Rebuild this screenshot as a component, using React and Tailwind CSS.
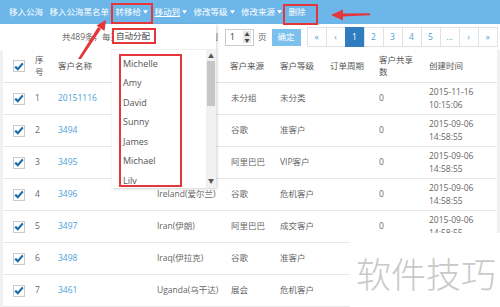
const ROWS = [
  { no: 1, name: '20151116', country: '', source: '未分组', level: '未分类', share: '0', date: '2015-11-16', time: '10:15:06' },
  { no: 2, name: '3494', country: 'Iceland(冰岛)', source: '谷歌', level: '准客户', share: '0', date: '2015-09-06', time: '14:58:55' },
  { no: 3, name: '3495', country: 'India(印度)', source: '阿里巴巴', level: 'VIP客户', share: '0', date: '2015-09-06', time: '14:58:55' },
  { no: 4, name: '3496', country: 'Ireland(爱尔兰)', source: '谷歌', level: '危机客户', share: '0', date: '2015-09-06', time: '14:58:55' },
  { no: 5, name: '3497', country: 'Iran(伊朗)', source: '阿里巴巴', level: '成交客户', share: '0', date: '2015-09-06', time: '14:58:55' },
  { no: 6, name: '3498', country: 'Iraq(伊拉克)', source: '谷歌', level: '准客户', share: '', date: '', time: '' },
  { no: 7, name: '3461', country: 'Uganda(乌干达)', source: '展会', level: '危机客户', share: '', date: '', time: '' },
]

const USERS = ['Michelle', 'Amy', 'David', 'Sunny', 'James', 'Michael', 'Lilv']
const PAGES = ['«', '‹', '1', '2', '3', '4', '5', '...', '›', '»']

const COLS = 'grid grid-cols-[28px_23px_99px_73px_50px_50px_49px_50px_78px]'

function Caret() {
  return (
    <svg width="5" height="4" viewBox="0 0 6 4" className="ml-[2px] inline-block">
      <path d="M0 0h6L3 4z" fill="#fff" />
    </svg>
  )
}

function Check() {
  return (
    <span className="w-[12px] h-[12px] border border-[#c9c9c9] bg-white flex items-center justify-center">
      <svg width="10" height="9" viewBox="0 0 10 9">
        <path d="M1.2 4.6l2.6 2.6L8.8 1.4" fill="none" stroke="#1d6aa8" strokeWidth="2.2" />
      </svg>
    </span>
  )
}

export default function App() {
  return (
    <div className="relative w-[500px] h-[307px] overflow-hidden bg-[#f1f1f1] text-[8.5px] leading-[12.5px] text-[#666] font-['Open_Sans','Noto_Sans_CJK_SC',sans-serif]">
      {/* toolbar */}
      <div className="h-[24px] bg-[#6db6e9] flex items-center pl-[9px] gap-[6.5px] text-white">
        <span>移入公海</span>
        <span>移入公海黑名单</span>
        <span className="flex items-center">转移给<Caret /></span>
        <span className="flex items-center"><span className="underline">移动到</span><Caret /></span>
        <span className="flex items-center">修改等级<Caret /></span>
        <span className="flex items-center">修改来源<Caret /></span>
        <span>删除</span>
      </div>

      {/* pager row */}
      <div className="h-[26px] bg-white flex items-center">
        <div className="ml-[62px] w-[156px] flex items-center">
          <span>共489条，每页</span>
          <span className="ml-auto">跳到</span>
        </div>
        <div className="ml-[7px] w-[29px] h-[17px] border border-[#ccc] flex items-center justify-between pl-[4px] pr-[2px] text-[#333]">
          <span>1</span>
          <span className="w-[8px] h-[12px] bg-[#e6e6e6] text-[5px] leading-[6px] text-center text-[#444]">▲<br />▼</span>
        </div>
        <span className="ml-[4px]">页</span>
        <span className="ml-[5px] w-[29px] h-[17px] bg-[#7cc0ee] text-white flex items-center justify-center">确定</span>
        <div className="ml-[6px] flex">
          {PAGES.map((p, i) => (
            <span
              key={i}
              className={
                p === '1'
                  ? 'w-[20px] h-[20px] -ml-px first:ml-0 flex items-center justify-center border border-[#2f7cbf] bg-[#2f7cbf] text-white'
                  : 'w-[20px] h-[20px] -ml-px first:ml-0 flex items-center justify-center border border-[#e2e2e2] bg-white text-[#4d9fd6]'
              }
            >
              {p}
            </span>
          ))}
        </div>
      </div>

      {/* table */}
      <div className="ml-[3px] mr-[3px] bg-white">
        <div className={COLS + ' h-[33px] items-center border-b border-[#e3e3e3] text-[#555]'}>
          <div className="flex justify-center pl-[3px]"><Check /></div>
          <div className="pl-[4px]">序<br />号</div>
          <div className="pl-[4px]">客户名称</div>
          <div className="pl-[4px]">国家</div>
          <div className="pl-[4px]">客户来源</div>
          <div className="pl-[4px]">客户等级</div>
          <div className="pl-[4px]">订单周期</div>
          <div className="pl-[4px]">客户共享<br />数</div>
          <div className="pl-[4px]">创建时间</div>
        </div>
        {ROWS.map((r) => (
          <div key={r.no} className={COLS + ' h-[32px] items-center border-b border-[#e8e8e8]'}>
            <div className="flex justify-center pl-[3px]"><Check /></div>
            <div className="pl-[4px]">{r.no}</div>
            <div className="pl-[4px] text-[#4d9fd6]">{r.name}</div>
            <div className="pl-[4px] whitespace-nowrap">{r.country}</div>
            <div className="pl-[5px]">{r.source}</div>
            <div className="pl-[4px]">{r.level}</div>
            <div className="pl-[4px]"></div>
            <div className="pl-[4px]">{r.share}</div>
            <div className="pl-[4px]">{r.date}{r.time && <br />}{r.time}</div>
          </div>
        ))}
      </div>

      {/* transfer dropdown */}
      <div className="absolute left-[112px] top-[24px] w-[104px] h-[164px] bg-white shadow-[1px_1px_3px_rgba(0,0,0,0.18)] flex flex-col overflow-hidden">
        <div className="h-[22px] shrink-0 flex items-center pl-[4px] pt-[2px] text-[#444]">自动分配</div>
        <div className="flex-1 min-h-0 flex border-t border-[#efefef] mt-[3px] overflow-hidden">
          <div className="flex-1 pt-[4px] pl-[11px] text-[#555] text-[9px]">
            {USERS.map((u) => (
              <div key={u} className="h-[19.5px] flex items-center">{u}</div>
            ))}
          </div>
          <div className="w-[10px] bg-[#f1f1f1] flex flex-col items-center text-[6px] leading-[8px] text-[#555]">
            <span className="mt-[2px]">▲</span>
            <div className="w-[8px] h-[45px] mt-[1px] bg-[#c6c6c6]" />
            <span className="mt-auto mb-[3px]">▼</span>
          </div>
        </div>
      </div>

      {/* annotations */}
      <div className="absolute left-[111px] top-[3px] w-[42px] h-[21px] border-2 border-[#e5363c]" />
      <div className="absolute left-[112px] top-[28px] w-[44px] h-[16px] border-2 border-[#e5363c]" />
      <div className="absolute left-[119px] top-[54px] w-[63px] h-[133px] border-2 border-[#e5363c]" />
      <div className="absolute left-[283px] top-[4px] w-[35px] h-[21px] border-2 border-[#e5363c]" />
      <svg className="absolute left-0 top-0" width="500" height="307" viewBox="0 0 500 307">
        <polygon points="78,59 81,59 101,29 98,27" fill="#e5363c" />
        <polygon points="106,20 104.5,31 96.5,25.5" fill="#e5363c" />
        <polygon points="342,13.6 370,13.2 370,15.2 342,16.4" fill="#e5363c" />
        <polygon points="331,15 343,9.5 343,20.5" fill="#e5363c" />
      </svg>

      {/* watermark */}
      <div className="absolute left-[350px] top-[233px] right-0 bottom-0 bg-white flex items-center pl-[6px] pt-[4px]">
        <span className="text-[35px] leading-none font-light text-[#c9c9c9] font-['Noto_Sans_CJK_SC',sans-serif]">软件技巧</span>
      </div>
    </div>
  )
}
